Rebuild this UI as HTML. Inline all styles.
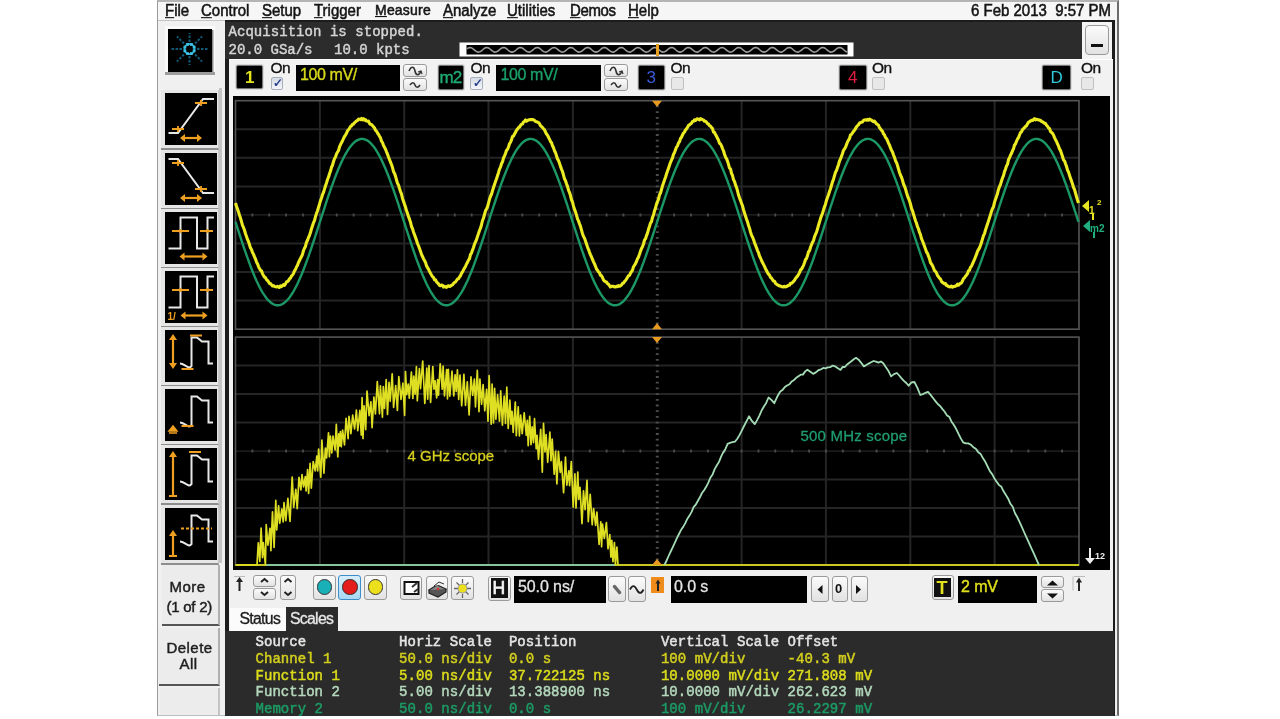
<!DOCTYPE html>
<html><head><meta charset="utf-8">
<style>
html,body{margin:0;padding:0;background:#fff;width:1280px;height:719px;overflow:hidden;position:relative;font-family:"Liberation Sans",sans-serif}
body{filter:blur(0.45px)}
.a{position:absolute;box-sizing:border-box}
.t{position:absolute;white-space:pre;line-height:1;font-family:"Liberation Sans",sans-serif}
.m{position:absolute;white-space:pre;line-height:1;font-family:"Liberation Mono",monospace}
.menu{font-size:15px;color:#141414;top:3px;-webkit-text-stroke:0.5px #141414;transform:scaleY(1.1);transform-origin:0 13px}
.menu u{text-decoration:underline;text-underline-offset:1px}
.blk{background:#000;border:1px solid #777;border-radius:2px;box-shadow:0 0 0 1px #d8d8d8}
.btn{background:linear-gradient(#fbfbfb,#e2e2e2);border:1px solid #9a9a9a;border-radius:3px}
.chk{background:linear-gradient(#d6dbe4,#f4f6f9);border:1px solid #a9b0bc;border-radius:2px}
.on{font-size:15.5px;color:#111;letter-spacing:-0.6px;-webkit-text-stroke:0.35px #111}
.tb{background:#000;border-bottom:2px solid #a8a8a8;border-right:2px solid #c8c8c8}
</style></head><body>
<!-- frame -->
<div class="a" style="left:157px;top:0;width:962px;height:716px;background:#efefef;border-left:1px solid #9a9a9a;border-right:2px solid #6c6c6c;border-top:2px solid #b4b4b4;border-bottom:1px solid #bdbdbd"></div>
<!-- menu -->
<div class="a" style="left:158px;top:2px;width:959px;height:18px;background:#f6f6f6"></div><div class="a" style="left:158px;top:19.5px;width:67px;height:1.5px;background:#c4c4c4"></div>
<div class="t menu" style="left:165px"><u>F</u>ile</div>
<div class="t menu" style="left:201px"><u>C</u>ontrol</div>
<div class="t menu" style="left:262px"><u>S</u>etup</div>
<div class="t menu" style="left:314px"><u>T</u>rigger</div>
<div class="t menu" style="left:375px;font-size:14px;letter-spacing:0.2px"><u>M</u>easure</div>
<div class="t menu" style="left:443px"><u>A</u>nalyze</div>
<div class="t menu" style="left:507px"><u>U</u>tilities</div>
<div class="t menu" style="left:570px;letter-spacing:-0.4px"><u>D</u>emos</div>
<div class="t menu" style="left:628px"><u>H</u>elp</div>
<div class="t menu" style="left:971px">6 Feb 2013  9:57 PM</div>

<!-- left panel -->
<div class="a" style="left:158px;top:21px;width:67px;height:694px;background:#f0f0f0"></div>
<div class="a" style="left:219px;top:88px;width:3px;height:475px;background:#c4c4c4"></div>
<div class="a" style="left:165px;top:26px;width:50px;height:48px;background:#fafafa"></div><div class="a" style="left:168px;top:28.5px;width:44px;height:43px;background:#000;box-shadow:1.5px 1px 0 #8a8a8a"></div>
<div class="a" style="left:165px;top:72px;width:50px;height:2.5px;background:#9c9c9c"></div>
<svg class="a" style="left:168px;top:28px" width="44" height="44" viewBox="0 0 44 44">
 <g stroke="#105a78" stroke-width="2" stroke-dasharray="2.5 1.5">
  <line x1="21.5" y1="14" x2="21.5" y2="5"/><line x1="21.5" y1="28" x2="21.5" y2="37"/>
  <line x1="14" y1="21" x2="3" y2="21"/><line x1="29" y1="21" x2="40" y2="21"/>
  <line x1="16" y1="15.5" x2="9" y2="8.5"/><line x1="27" y1="15.5" x2="34" y2="8.5"/>
  <line x1="16" y1="26.5" x2="9" y2="33.5"/><line x1="27" y1="26.5" x2="34" y2="33.5"/>
 </g>
 <circle cx="21.5" cy="21" r="5" fill="none" stroke="#2aa8cc" stroke-width="2"/>
 <rect x="24.72" y="21.51" width="2.8" height="2.8" fill="#3cc4e8"/><rect x="22.01" y="24.22" width="2.8" height="2.8" fill="#3cc4e8"/><rect x="18.19" y="24.22" width="2.8" height="2.8" fill="#3cc4e8"/><rect x="15.48" y="21.51" width="2.8" height="2.8" fill="#3cc4e8"/><rect x="15.48" y="17.69" width="2.8" height="2.8" fill="#3cc4e8"/><rect x="18.19" y="14.98" width="2.8" height="2.8" fill="#3cc4e8"/><rect x="22.01" y="14.98" width="2.8" height="2.8" fill="#3cc4e8"/><rect x="24.72" y="17.69" width="2.8" height="2.8" fill="#3cc4e8"/>
</svg>

<!-- left toolbar buttons -->
<div class="a" style="left:161px;top:90px;width:58px;height:60px;background:#e6e6e6;border-bottom:2px solid #8e8e8e;border-right:1px solid #c8c8c8"></div>
<div class="a" style="left:165px;top:93px;width:51.5px;height:52px;background:#000"></div>
<svg class="a" style="left:165px;top:93px" width="52" height="52" viewBox="0 0 52 52"><path d="M3.5 40H13L38 6H49" fill="none" stroke="#e8e8e8" stroke-width="2"/><path d="M7 36h12M13 33v6M30 10h12M36 7v6" stroke="#f0a020" stroke-width="1.8"/><path d="M19 45H33" stroke="#f0a020" stroke-width="2.2"/><path d="M15 45l5-4v8z M37 45l-5-4v8z" fill="#f0a020"/></svg>
<div class="a" style="left:161px;top:149.5px;width:58px;height:60px;background:#e6e6e6;border-bottom:2px solid #8e8e8e;border-right:1px solid #c8c8c8"></div>
<div class="a" style="left:165px;top:152.5px;width:51.5px;height:52px;background:#000"></div>
<svg class="a" style="left:165px;top:152.5px" width="52" height="52" viewBox="0 0 52 52"><path d="M3.5 6H13L38 40H49" fill="none" stroke="#e8e8e8" stroke-width="2"/><path d="M7 10h12M13 7v6M30 36h12M36 33v6" stroke="#f0a020" stroke-width="1.8"/><path d="M19 45H33" stroke="#f0a020" stroke-width="2.2"/><path d="M15 45l5-4v8z M37 45l-5-4v8z" fill="#f0a020"/></svg>
<div class="a" style="left:161px;top:209px;width:58px;height:60px;background:#e6e6e6;border-bottom:2px solid #8e8e8e;border-right:1px solid #c8c8c8"></div>
<div class="a" style="left:165px;top:212px;width:51.5px;height:52px;background:#000"></div>
<svg class="a" style="left:165px;top:212px" width="52" height="52" viewBox="0 0 52 52"><path d="M3.5 36.5H15.5V5.5H32V36.5H42.5V5.5H49" fill="none" stroke="#e8e8e8" stroke-width="2"/><path d="M7 19h17M15.5 17v4M35 19h13M42.5 17v4" stroke="#f0a020" stroke-width="1.8"/><path d="M18.5 44.5H38.5" stroke="#f0a020" stroke-width="2.2"/><path d="M14.5 44.5l5-4v8z M42.5 44.5l-5-4v8z" fill="#f0a020"/></svg>
<div class="a" style="left:161px;top:268px;width:58px;height:60px;background:#e6e6e6;border-bottom:2px solid #8e8e8e;border-right:1px solid #c8c8c8"></div>
<div class="a" style="left:165px;top:271px;width:51.5px;height:52px;background:#000"></div>
<svg class="a" style="left:165px;top:271px" width="52" height="52" viewBox="0 0 52 52"><path d="M3.5 36.5H15.5V5.5H32V36.5H42.5V5.5H49" fill="none" stroke="#e8e8e8" stroke-width="2"/><path d="M7 19h17M15.5 17v4M35 19h13M42.5 17v4" stroke="#f0a020" stroke-width="1.8"/><path d="M19.5 44.5H38.5" stroke="#f0a020" stroke-width="2.2"/><path d="M15.5 44.5l5-4v8z M42.5 44.5l-5-4v8z" fill="#f0a020"/><text x="2.5" y="49" font-family="Liberation Sans" font-weight="bold" font-size="10" fill="#f0a020">1/</text></svg>
<div class="a" style="left:161px;top:327px;width:58px;height:60px;background:#e6e6e6;border-bottom:2px solid #8e8e8e;border-right:1px solid #c8c8c8"></div>
<div class="a" style="left:165px;top:330px;width:51.5px;height:52px;background:#000"></div>
<svg class="a" style="left:165px;top:330px" width="52" height="52" viewBox="0 0 52 52"><path d="M15 33.5c3 0 6 3 9 4 1.5 0 2-1 2.5-1.5V7.5h5.5l5 4h6.5V33.5H48" fill="none" stroke="#e8e8e8" stroke-width="2"/><path d="M8 9V34" stroke="#f0a020" stroke-width="2.2"/><path d="M8 4l-4 6h8z M8 39l-4-6h8z" fill="#f0a020"/><path d="M25 5.5h12M16.5 39h12" stroke="#f0a020" stroke-width="2"/></svg>
<div class="a" style="left:161px;top:386px;width:58px;height:60px;background:#e6e6e6;border-bottom:2px solid #8e8e8e;border-right:1px solid #c8c8c8"></div>
<div class="a" style="left:165px;top:389px;width:51.5px;height:52px;background:#000"></div>
<svg class="a" style="left:165px;top:389px" width="52" height="52" viewBox="0 0 52 52"><path d="M15 33.5c3 0 6 3 9 4 1.5 0 2-1 2.5-1.5V7.5h5.5l5 4h6.5V33.5H48" fill="none" stroke="#e8e8e8" stroke-width="2"/><path d="M16.5 37h12" stroke="#f0a020" stroke-width="2"/><path d="M8 37l-4 5h8z M4 44h8" fill="#f0a020" stroke="#f0a020" stroke-width="1.5"/></svg>
<div class="a" style="left:161px;top:445px;width:58px;height:60px;background:#e6e6e6;border-bottom:2px solid #8e8e8e;border-right:1px solid #c8c8c8"></div>
<div class="a" style="left:165px;top:448px;width:51.5px;height:52px;background:#000"></div>
<svg class="a" style="left:165px;top:448px" width="52" height="52" viewBox="0 0 52 52"><path d="M15 33.5c3 0 6 3 9 4 1.5 0 2-1 2.5-1.5V7.5h5.5l5 4h6.5V33.5H48" fill="none" stroke="#e8e8e8" stroke-width="2"/><path d="M8 8V48M4 48h8" stroke="#f0a020" stroke-width="2.2"/><path d="M8 3l-4 6h8z" fill="#f0a020"/><path d="M24 4h12" stroke="#f0a020" stroke-width="2"/></svg>
<div class="a" style="left:161px;top:504.5px;width:58px;height:60px;background:#e6e6e6;border-bottom:2px solid #8e8e8e;border-right:1px solid #c8c8c8"></div>
<div class="a" style="left:165px;top:507.5px;width:51.5px;height:52px;background:#000"></div>
<svg class="a" style="left:165px;top:507.5px" width="52" height="52" viewBox="0 0 52 52"><path d="M15 33.5c3 0 6 3 9 4 1.5 0 2-1 2.5-1.5V7.5h5.5l5 4h6.5V33.5H48" fill="none" stroke="#e8e8e8" stroke-width="2"/><path d="M8 27V48M4 48h8" stroke="#f0a020" stroke-width="2.2"/><path d="M8 22l-4 6h8z" fill="#f0a020"/><path d="M16 20.5H47" stroke="#f0a020" stroke-width="1.8" stroke-dasharray="3 2"/></svg>

<div class="a" style="left:162px;top:565px;width:58px;height:61px;background:#ececec;border-right:2px solid #b0b0b0;border-bottom:2px solid #555"></div>
<div class="t" style="left:169.5px;top:579px;font-size:15px;color:#1e1e1e;letter-spacing:0.5px;-webkit-text-stroke:0.45px #1e1e1e">More</div>
<div class="t" style="left:166.5px;top:598.5px;font-size:15px;color:#1e1e1e;letter-spacing:-0.25px;-webkit-text-stroke:0.45px #1e1e1e">(1 of 2)</div>
<div class="a" style="left:159px;top:628px;width:61px;height:58px;background:#ececec;border-right:2px solid #b0b0b0;border-bottom:2px solid #555"></div>
<div class="t" style="left:166.5px;top:639.5px;font-size:15px;color:#1e1e1e;letter-spacing:0.45px;-webkit-text-stroke:0.45px #1e1e1e">Delete</div>
<div class="t" style="left:179.5px;top:655.5px;font-size:15px;color:#1e1e1e;letter-spacing:0.5px;-webkit-text-stroke:0.45px #1e1e1e">All</div>
<div class="a" style="left:160px;top:688px;width:60px;height:27px;background:#ececec;border-right:2px solid #c4c4c4"></div>

<!-- dark vertical divider -->
<div class="a" style="left:225px;top:21px;width:3.5px;height:695px;background:#1c1c1c"></div>
<!-- status panel -->
<div class="a" style="left:225px;top:20.5px;width:857px;height:38px;background:#2c2c2c"></div>
<div class="m" style="left:228.5px;top:25px;font-size:14px;color:#d4d4d4;-webkit-text-stroke:0.45px #d4d4d4;letter-spacing:0.05px">Acquisition is stopped.</div>
<div class="m" style="left:228.5px;top:42.5px;font-size:14px;color:#d4d4d4;-webkit-text-stroke:0.45px #d4d4d4">20.0 GSa/s</div><div class="m" style="left:334px;top:42.5px;font-size:14px;color:#d4d4d4;-webkit-text-stroke:0.45px #d4d4d4">10.0 kpts</div>
<svg width="1280" height="719" style="position:absolute;left:0;top:0">
<rect x="459.5" y="42.5" width="394" height="14" fill="#fff"/>
<rect x="466.5" y="45" width="381" height="9.5" fill="#000"/>
<polyline points="467.0,48.8 468.0,48.1 469.0,47.7 470.0,47.5 471.0,47.7 472.0,48.1 473.0,48.8 474.0,49.6 475.0,50.5 476.0,51.2 477.0,51.8 478.0,52.1 479.0,52.0 480.0,51.7 481.0,51.1 482.0,50.3 483.0,49.5 484.0,48.6 485.0,48.0 486.0,47.6 487.0,47.5 488.0,47.7 489.0,48.2 490.0,49.0 491.0,49.8 492.0,50.6 493.0,51.4 494.0,51.9 495.0,52.1 496.0,52.0 497.0,51.6 498.0,51.0 499.0,50.1 500.0,49.3 501.0,48.5 502.0,47.9 503.0,47.6 504.0,47.5 505.0,47.8 506.0,48.4 507.0,49.1 508.0,50.0 509.0,50.8 510.0,51.5 511.0,51.9 512.0,52.1 513.0,51.9 514.0,51.5 515.0,50.8 516.0,50.0 517.0,49.1 518.0,48.4 519.0,47.8 520.0,47.5 521.0,47.6 522.0,47.9 523.0,48.5 524.0,49.3 525.0,50.1 526.0,50.9 527.0,51.6 528.0,52.0 529.0,52.1 530.0,51.9 531.0,51.4 532.0,50.6 533.0,49.8 534.0,49.0 535.0,48.2 536.0,47.7 537.0,47.5 538.0,47.6 539.0,48.0 540.0,48.6 541.0,49.5 542.0,50.3 543.0,51.1 544.0,51.7 545.0,52.0 546.0,52.1 547.0,51.8 548.0,51.2 549.0,50.5 550.0,49.6 551.0,48.8 552.0,48.1 553.0,47.7 554.0,47.5 555.0,47.7 556.0,48.1 557.0,48.8 558.0,49.6 559.0,50.5 560.0,51.2 561.0,51.8 562.0,52.1 563.0,52.0 564.0,51.7 565.0,51.1 566.0,50.3 567.0,49.5 568.0,48.7 569.0,48.0 570.0,47.6 571.0,47.5 572.0,47.7 573.0,48.2 574.0,49.0 575.0,49.8 576.0,50.6 577.0,51.4 578.0,51.9 579.0,52.1 580.0,52.0 581.0,51.6 582.0,51.0 583.0,50.1 584.0,49.3 585.0,48.5 586.0,47.9 587.0,47.6 588.0,47.5 589.0,47.8 590.0,48.4 591.0,49.1 592.0,50.0 593.0,50.8 594.0,51.5 595.0,51.9 596.0,52.1 597.0,51.9 598.0,51.5 599.0,50.8 600.0,50.0 601.0,49.1 602.0,48.4 603.0,47.8 604.0,47.5 605.0,47.6 606.0,47.9 607.0,48.5 608.0,49.3 609.0,50.1 610.0,50.9 611.0,51.6 612.0,52.0 613.0,52.1 614.0,51.9 615.0,51.4 616.0,50.6 617.0,49.8 618.0,49.0 619.0,48.2 620.0,47.7 621.0,47.5 622.0,47.6 623.0,48.0 624.0,48.6 625.0,49.5 626.0,50.3 627.0,51.1 628.0,51.7 629.0,52.0 630.0,52.1 631.0,51.8 632.0,51.2 633.0,50.5 634.0,49.6 635.0,48.8 636.0,48.1 637.0,47.7 638.0,47.5 639.0,47.7 640.0,48.1 641.0,48.8 642.0,49.6 643.0,50.5 644.0,51.2 645.0,51.8 646.0,52.1 647.0,52.0 648.0,51.7 649.0,51.1 650.0,50.3 651.0,49.5 652.0,48.6 653.0,48.0 654.0,47.6 655.0,47.5 656.0,47.7 657.0,48.2 658.0,49.0 659.0,49.8 660.0,50.6 661.0,51.4 662.0,51.9 663.0,52.1 664.0,52.0 665.0,51.6 666.0,51.0 667.0,50.1 668.0,49.3 669.0,48.5 670.0,47.9 671.0,47.6 672.0,47.5 673.0,47.8 674.0,48.4 675.0,49.1 676.0,50.0 677.0,50.8 678.0,51.5 679.0,51.9 680.0,52.1 681.0,51.9 682.0,51.5 683.0,50.8 684.0,50.0 685.0,49.1 686.0,48.4 687.0,47.8 688.0,47.5 689.0,47.6 690.0,47.9 691.0,48.5 692.0,49.3 693.0,50.1 694.0,50.9 695.0,51.6 696.0,52.0 697.0,52.1 698.0,51.9 699.0,51.4 700.0,50.6 701.0,49.8 702.0,49.0 703.0,48.2 704.0,47.7 705.0,47.5 706.0,47.6 707.0,48.0 708.0,48.6 709.0,49.5 710.0,50.3 711.0,51.1 712.0,51.7 713.0,52.0 714.0,52.1 715.0,51.8 716.0,51.2 717.0,50.5 718.0,49.6 719.0,48.8 720.0,48.1 721.0,47.7 722.0,47.5 723.0,47.7 724.0,48.1 725.0,48.8 726.0,49.6 727.0,50.5 728.0,51.2 729.0,51.8 730.0,52.1 731.0,52.0 732.0,51.7 733.0,51.1 734.0,50.3 735.0,49.5 736.0,48.7 737.0,48.0 738.0,47.6 739.0,47.5 740.0,47.7 741.0,48.2 742.0,49.0 743.0,49.8 744.0,50.6 745.0,51.4 746.0,51.9 747.0,52.1 748.0,52.0 749.0,51.6 750.0,51.0 751.0,50.1 752.0,49.3 753.0,48.5 754.0,47.9 755.0,47.6 756.0,47.5 757.0,47.8 758.0,48.4 759.0,49.1 760.0,50.0 761.0,50.8 762.0,51.5 763.0,51.9 764.0,52.1 765.0,51.9 766.0,51.5 767.0,50.8 768.0,50.0 769.0,49.1 770.0,48.4 771.0,47.8 772.0,47.5 773.0,47.6 774.0,47.9 775.0,48.5 776.0,49.3 777.0,50.1 778.0,50.9 779.0,51.6 780.0,52.0 781.0,52.1 782.0,51.9 783.0,51.4 784.0,50.6 785.0,49.8 786.0,49.0 787.0,48.2 788.0,47.7 789.0,47.5 790.0,47.6 791.0,48.0 792.0,48.6 793.0,49.5 794.0,50.3 795.0,51.1 796.0,51.7 797.0,52.0 798.0,52.1 799.0,51.8 800.0,51.2 801.0,50.5 802.0,49.6 803.0,48.8 804.0,48.1 805.0,47.7 806.0,47.5 807.0,47.7 808.0,48.1 809.0,48.8 810.0,49.6 811.0,50.5 812.0,51.2 813.0,51.8 814.0,52.1 815.0,52.0 816.0,51.7 817.0,51.1 818.0,50.3 819.0,49.5 820.0,48.7 821.0,48.0 822.0,47.6 823.0,47.5 824.0,47.7 825.0,48.2 826.0,49.0 827.0,49.8 828.0,50.6 829.0,51.4 830.0,51.9 831.0,52.1 832.0,52.0 833.0,51.6 834.0,51.0 835.0,50.1 836.0,49.3 837.0,48.5 838.0,47.9 839.0,47.6 840.0,47.5 841.0,47.8 842.0,48.4 843.0,49.1 844.0,50.0 845.0,50.8 846.0,51.5 847.0,51.9" fill="none" stroke="#9a9a9a" stroke-width="1.6"/>
<rect x="656" y="44" width="3" height="12" fill="#e8a020"/>
</svg>
<div class="a" style="left:1082px;top:20.5px;width:31px;height:38px;background:#f4f4f4"></div>
<div class="a btn" style="left:1085px;top:25px;width:24px;height:30px;border-radius:4px"></div>
<div class="a" style="left:1091px;top:44px;width:12px;height:3px;background:#111"></div>
<div class="a" style="left:1112px;top:20.5px;width:3px;height:696px;background:#1c1c1c"></div>
<div class="a" style="left:225px;top:20px;width:890px;height:2px;background:#1c1c1c"></div>

<!-- channel bar -->
<div class="a" style="left:228.5px;top:58.5px;width:884px;height:37px;background:#f2f2f2;border-top:1px solid #fff"></div>
<div class="a blk" style="left:236px;top:65px;width:27px;height:24px"></div>
<div class="t" style="left:245px;top:69px;font-size:17px;font-weight:bold;color:#e4e41c">1</div>
<div class="t on" style="left:270.5px;top:60px">On</div>
<div class="a chk" style="left:270.5px;top:77px;width:12.5px;height:13px"></div>
<div class="t" style="left:273px;top:77px;font-size:12px;font-weight:bold;color:#27408b">✓</div>
<div class="a" style="left:295.5px;top:64.5px;width:104px;height:26.5px;background:#000"></div>
<div class="t" style="left:300px;top:67px;font-size:16px;color:#dada1c;letter-spacing:-0.4px;-webkit-text-stroke:0.35px #dada1c">100 mV/</div>
<div class="a btn" style="left:403px;top:64px;width:24px;height:13px"></div>
<div class="a btn" style="left:403px;top:78px;width:24px;height:13px"></div>
<svg class="a" style="left:403px;top:64px" width="24" height="27"><path d="M6 7c2-5 5-5 6 0s4 5 6 0M7 21c2-3 4-3 5 0s3 3 5 0" fill="none" stroke="#333" stroke-width="1.6"/><path d="M15 8l3-1 1 3" fill="none" stroke="#333" stroke-width="1.2"/></svg>

<div class="a blk" style="left:437.5px;top:64.5px;width:26.5px;height:25px"></div>
<div class="t" style="left:439.5px;top:69px;font-size:17px;color:#1faa72;letter-spacing:-0.8px;-webkit-text-stroke:0.4px #1faa72">m2</div>
<div class="t on" style="left:470.5px;top:60px">On</div>
<div class="a chk" style="left:470px;top:77px;width:13px;height:13px"></div>
<div class="t" style="left:472.5px;top:77px;font-size:12px;font-weight:bold;color:#27408b">✓</div>
<div class="a" style="left:495.5px;top:64.5px;width:105.5px;height:26.5px;background:#000"></div>
<div class="t" style="left:500.5px;top:67px;font-size:16px;color:#1aa06a;letter-spacing:-0.4px;-webkit-text-stroke:0.35px #1aa06a">100 mV/</div>
<div class="a btn" style="left:604px;top:64px;width:24px;height:13px"></div>
<div class="a btn" style="left:604px;top:78px;width:24px;height:13px"></div>
<svg class="a" style="left:604px;top:64px" width="24" height="27"><path d="M6 7c2-5 5-5 6 0s4 5 6 0M7 21c2-3 4-3 5 0s3 3 5 0" fill="none" stroke="#333" stroke-width="1.6"/><path d="M15 8l3-1 1 3" fill="none" stroke="#333" stroke-width="1.2"/></svg>

<div class="a blk" style="left:638px;top:64.5px;width:27px;height:25px"></div>
<div class="t" style="left:646.5px;top:69px;font-size:17px;color:#3a5ad8">3</div>
<div class="t on" style="left:670.5px;top:60px">On</div>
<div class="a chk" style="left:670.5px;top:77px;width:13px;height:13px;background:#e8e8e8;border-color:#c0c0c0"></div>

<div class="a blk" style="left:839px;top:64.5px;width:28px;height:25px"></div>
<div class="t" style="left:848px;top:69px;font-size:17px;color:#e01c40">4</div>
<div class="t on" style="left:872px;top:60px">On</div>
<div class="a chk" style="left:872px;top:77px;width:13px;height:13px;background:#e8e8e8;border-color:#c0c0c0"></div>

<div class="a blk" style="left:1042px;top:64.5px;width:29px;height:25px"></div>
<div class="t" style="left:1050.5px;top:69px;font-size:17px;color:#30c8d8">D</div>
<div class="t on" style="left:1081px;top:60px">On</div>
<div class="a chk" style="left:1081px;top:77px;width:13px;height:13px;background:#e8e8e8;border-color:#c0c0c0"></div>

<!-- waveform area -->
<div class="a" style="left:228.5px;top:95.5px;width:884px;height:474.5px;background:#f2f2f2"></div>
<div class="a" style="left:232.5px;top:95.5px;width:877.5px;height:474.5px;background:#000"></div>
<svg width="1280" height="719" style="position:absolute;left:0;top:0">
<g stroke="#252525" stroke-width="2"><line x1="319.9" y1="100.7" x2="319.9" y2="329.2"/><line x1="404.2" y1="100.7" x2="404.2" y2="329.2"/><line x1="488.5" y1="100.7" x2="488.5" y2="329.2"/><line x1="572.9" y1="100.7" x2="572.9" y2="329.2"/><line x1="741.6" y1="100.7" x2="741.6" y2="329.2"/><line x1="825.9" y1="100.7" x2="825.9" y2="329.2"/><line x1="910.3" y1="100.7" x2="910.3" y2="329.2"/><line x1="994.6" y1="100.7" x2="994.6" y2="329.2"/><line x1="235.5" y1="129.3" x2="1079.0" y2="129.3"/><line x1="235.5" y1="157.8" x2="1079.0" y2="157.8"/><line x1="235.5" y1="186.4" x2="1079.0" y2="186.4"/><line x1="235.5" y1="243.5" x2="1079.0" y2="243.5"/><line x1="235.5" y1="272.1" x2="1079.0" y2="272.1"/><line x1="235.5" y1="300.6" x2="1079.0" y2="300.6"/></g><line x1="235.5" y1="214.9" x2="1079.0" y2="214.9" stroke="#262626" stroke-width="1.4"/><path d="M252.4 213.4v3M269.2 213.4v3M286.1 213.4v3M303.0 213.4v3M319.9 213.4v3M336.7 213.4v3M353.6 213.4v3M370.5 213.4v3M387.3 213.4v3M404.2 213.4v3M421.1 213.4v3M437.9 213.4v3M454.8 213.4v3M471.7 213.4v3M488.5 213.4v3M505.4 213.4v3M522.3 213.4v3M539.2 213.4v3M556.0 213.4v3M572.9 213.4v3M589.8 213.4v3M606.6 213.4v3M623.5 213.4v3M640.4 213.4v3M657.2 213.4v3M674.1 213.4v3M691.0 213.4v3M707.9 213.4v3M724.7 213.4v3M741.6 213.4v3M758.5 213.4v3M775.3 213.4v3M792.2 213.4v3M809.1 213.4v3M825.9 213.4v3M842.8 213.4v3M859.7 213.4v3M876.6 213.4v3M893.4 213.4v3M910.3 213.4v3M927.2 213.4v3M944.0 213.4v3M960.9 213.4v3M977.8 213.4v3M994.6 213.4v3M1011.5 213.4v3M1028.4 213.4v3M1045.3 213.4v3M1062.1 213.4v3M655.8 106.4h3M655.8 112.1h3M655.8 117.8h3M655.8 123.6h3M655.8 129.3h3M655.8 135.0h3M655.8 140.7h3M655.8 146.4h3M655.8 152.1h3M655.8 157.8h3M655.8 163.5h3M655.8 169.2h3M655.8 175.0h3M655.8 180.7h3M655.8 186.4h3M655.8 192.1h3M655.8 197.8h3M655.8 203.5h3M655.8 209.2h3M655.8 214.9h3M655.8 220.7h3M655.8 226.4h3M655.8 232.1h3M655.8 237.8h3M655.8 243.5h3M655.8 249.2h3M655.8 254.9h3M655.8 260.7h3M655.8 266.4h3M655.8 272.1h3M655.8 277.8h3M655.8 283.5h3M655.8 289.2h3M655.8 294.9h3M655.8 300.6h3M655.8 306.4h3M655.8 312.1h3M655.8 317.8h3M655.8 323.5h3" stroke="#4c4c4c" stroke-width="1.8"/><rect x="235.5" y="100.7" width="843.5" height="228.5" fill="none" stroke="#555" stroke-width="1.6"/>
<g stroke="#252525" stroke-width="2"><line x1="319.9" y1="337.1" x2="319.9" y2="565.0"/><line x1="404.2" y1="337.1" x2="404.2" y2="565.0"/><line x1="488.5" y1="337.1" x2="488.5" y2="565.0"/><line x1="572.9" y1="337.1" x2="572.9" y2="565.0"/><line x1="741.6" y1="337.1" x2="741.6" y2="565.0"/><line x1="825.9" y1="337.1" x2="825.9" y2="565.0"/><line x1="910.3" y1="337.1" x2="910.3" y2="565.0"/><line x1="994.6" y1="337.1" x2="994.6" y2="565.0"/><line x1="235.5" y1="365.6" x2="1079.0" y2="365.6"/><line x1="235.5" y1="394.1" x2="1079.0" y2="394.1"/><line x1="235.5" y1="422.6" x2="1079.0" y2="422.6"/><line x1="235.5" y1="479.5" x2="1079.0" y2="479.5"/><line x1="235.5" y1="508.0" x2="1079.0" y2="508.0"/><line x1="235.5" y1="536.5" x2="1079.0" y2="536.5"/></g><line x1="235.5" y1="451.1" x2="1079.0" y2="451.1" stroke="#262626" stroke-width="1.4"/><path d="M252.4 449.6v3M269.2 449.6v3M286.1 449.6v3M303.0 449.6v3M319.9 449.6v3M336.7 449.6v3M353.6 449.6v3M370.5 449.6v3M387.3 449.6v3M404.2 449.6v3M421.1 449.6v3M437.9 449.6v3M454.8 449.6v3M471.7 449.6v3M488.5 449.6v3M505.4 449.6v3M522.3 449.6v3M539.2 449.6v3M556.0 449.6v3M572.9 449.6v3M589.8 449.6v3M606.6 449.6v3M623.5 449.6v3M640.4 449.6v3M657.2 449.6v3M674.1 449.6v3M691.0 449.6v3M707.9 449.6v3M724.7 449.6v3M741.6 449.6v3M758.5 449.6v3M775.3 449.6v3M792.2 449.6v3M809.1 449.6v3M825.9 449.6v3M842.8 449.6v3M859.7 449.6v3M876.6 449.6v3M893.4 449.6v3M910.3 449.6v3M927.2 449.6v3M944.0 449.6v3M960.9 449.6v3M977.8 449.6v3M994.6 449.6v3M1011.5 449.6v3M1028.4 449.6v3M1045.3 449.6v3M1062.1 449.6v3M655.8 342.8h3M655.8 348.5h3M655.8 354.2h3M655.8 359.9h3M655.8 365.6h3M655.8 371.3h3M655.8 377.0h3M655.8 382.7h3M655.8 388.4h3M655.8 394.1h3M655.8 399.8h3M655.8 405.5h3M655.8 411.2h3M655.8 416.9h3M655.8 422.6h3M655.8 428.3h3M655.8 434.0h3M655.8 439.7h3M655.8 445.4h3M655.8 451.1h3M655.8 456.7h3M655.8 462.4h3M655.8 468.1h3M655.8 473.8h3M655.8 479.5h3M655.8 485.2h3M655.8 490.9h3M655.8 496.6h3M655.8 502.3h3M655.8 508.0h3M655.8 513.7h3M655.8 519.4h3M655.8 525.1h3M655.8 530.8h3M655.8 536.5h3M655.8 542.2h3M655.8 547.9h3M655.8 553.6h3M655.8 559.3h3" stroke="#4c4c4c" stroke-width="1.8"/><rect x="235.5" y="337.1" width="843.5" height="227.9" fill="none" stroke="#555" stroke-width="1.6"/>
<polyline points="235.5,221.9 236.5,225.0 237.5,228.1 238.5,231.2 239.5,234.3 240.5,237.4 241.5,240.4 242.5,243.4 243.5,246.4 244.5,249.3 245.5,252.2 246.5,255.1 247.5,257.9 248.5,260.7 249.5,263.4 250.5,266.1 251.5,268.7 252.5,271.2 253.5,273.7 254.5,276.1 255.5,278.4 256.5,280.7 257.5,282.8 258.5,284.9 259.5,286.9 260.5,288.8 261.5,290.6 262.5,292.3 263.5,293.9 264.5,295.4 265.5,296.8 266.5,298.2 267.5,299.4 268.5,300.5 269.5,301.4 270.5,302.3 271.5,303.1 272.5,303.7 273.5,304.3 274.5,304.7 275.5,305.0 276.5,305.2 277.5,305.3 278.5,305.3 279.5,305.1 280.5,304.8 281.5,304.5 282.5,304.0 283.5,303.4 284.5,302.6 285.5,301.8 286.5,300.9 287.5,299.8 288.5,298.7 289.5,297.4 290.5,296.0 291.5,294.5 292.5,293.0 293.5,291.3 294.5,289.5 295.5,287.7 296.5,285.7 297.5,283.7 298.5,281.5 299.5,279.3 300.5,277.0 301.5,274.7 302.5,272.2 303.5,269.7 304.5,267.1 305.5,264.5 306.5,261.8 307.5,259.1 308.5,256.3 309.5,253.4 310.5,250.5 311.5,247.6 312.5,244.6 313.5,241.6 314.5,238.6 315.5,235.5 316.5,232.5 317.5,229.4 318.5,226.3 319.5,223.2 320.5,220.1 321.5,217.0 322.5,213.9 323.5,210.8 324.5,207.8 325.5,204.7 326.5,201.7 327.5,198.7 328.5,195.7 329.5,192.8 330.5,189.9 331.5,187.1 332.5,184.3 333.5,181.6 334.5,178.9 335.5,176.3 336.5,173.7 337.5,171.2 338.5,168.8 339.5,166.5 340.5,164.2 341.5,162.0 342.5,159.9 343.5,157.9 344.5,156.0 345.5,154.1 346.5,152.4 347.5,150.8 348.5,149.2 349.5,147.8 350.5,146.4 351.5,145.2 352.5,144.1 353.5,143.0 354.5,142.1 355.5,141.3 356.5,140.6 357.5,140.1 358.5,139.6 359.5,139.3 360.5,139.0 361.5,138.9 362.5,138.9 363.5,139.0 364.5,139.3 365.5,139.6 366.5,140.1 367.5,140.6 368.5,141.3 369.5,142.1 370.5,143.0 371.5,144.1 372.5,145.2 373.5,146.4 374.5,147.8 375.5,149.2 376.5,150.8 377.5,152.4 378.5,154.1 379.5,156.0 380.5,157.9 381.5,159.9 382.5,162.0 383.5,164.2 384.5,166.5 385.5,168.8 386.5,171.2 387.5,173.7 388.5,176.3 389.5,178.9 390.5,181.6 391.5,184.3 392.5,187.1 393.5,189.9 394.5,192.8 395.5,195.7 396.5,198.7 397.5,201.7 398.5,204.7 399.5,207.8 400.5,210.8 401.5,213.9 402.5,217.0 403.5,220.1 404.5,223.2 405.5,226.3 406.5,229.4 407.5,232.5 408.5,235.5 409.5,238.6 410.5,241.6 411.5,244.6 412.5,247.6 413.5,250.5 414.5,253.4 415.5,256.3 416.5,259.1 417.5,261.8 418.5,264.5 419.5,267.1 420.5,269.7 421.5,272.2 422.5,274.7 423.5,277.0 424.5,279.3 425.5,281.5 426.5,283.7 427.5,285.7 428.5,287.7 429.5,289.5 430.5,291.3 431.5,293.0 432.5,294.5 433.5,296.0 434.5,297.4 435.5,298.7 436.5,299.8 437.5,300.9 438.5,301.8 439.5,302.6 440.5,303.4 441.5,304.0 442.5,304.5 443.5,304.8 444.5,305.1 445.5,305.3 446.5,305.3 447.5,305.2 448.5,305.0 449.5,304.7 450.5,304.3 451.5,303.7 452.5,303.1 453.5,302.3 454.5,301.4 455.5,300.5 456.5,299.4 457.5,298.2 458.5,296.8 459.5,295.4 460.5,293.9 461.5,292.3 462.5,290.6 463.5,288.8 464.5,286.9 465.5,284.9 466.5,282.8 467.5,280.7 468.5,278.4 469.5,276.1 470.5,273.7 471.5,271.2 472.5,268.7 473.5,266.1 474.5,263.4 475.5,260.7 476.5,257.9 477.5,255.1 478.5,252.2 479.5,249.3 480.5,246.4 481.5,243.4 482.5,240.4 483.5,237.4 484.5,234.3 485.5,231.2 486.5,228.1 487.5,225.0 488.5,221.9 489.5,218.8 490.5,215.7 491.5,212.7 492.5,209.6 493.5,206.5 494.5,203.5 495.5,200.5 496.5,197.5 497.5,194.6 498.5,191.7 499.5,188.8 500.5,186.0 501.5,183.2 502.5,180.5 503.5,177.8 504.5,175.3 505.5,172.7 506.5,170.3 507.5,167.9 508.5,165.6 509.5,163.3 510.5,161.2 511.5,159.1 512.5,157.1 513.5,155.2 514.5,153.4 515.5,151.7 516.5,150.1 517.5,148.6 518.5,147.2 519.5,145.9 520.5,144.7 521.5,143.6 522.5,142.7 523.5,141.8 524.5,141.0 525.5,140.4 526.5,139.9 527.5,139.5 528.5,139.2 529.5,139.0 530.5,138.9 531.5,138.9 532.5,139.1 533.5,139.4 534.5,139.8 535.5,140.3 536.5,140.9 537.5,141.6 538.5,142.5 539.5,143.4 540.5,144.5 541.5,145.7 542.5,146.9 543.5,148.3 544.5,149.8 545.5,151.4 546.5,153.1 547.5,154.9 548.5,156.7 549.5,158.7 550.5,160.7 551.5,162.9 552.5,165.1 553.5,167.4 554.5,169.8 555.5,172.2 556.5,174.7 557.5,177.3 558.5,180.0 559.5,182.7 560.5,185.4 561.5,188.2 562.5,191.1 563.5,194.0 564.5,196.9 565.5,199.9 566.5,202.9 567.5,205.9 568.5,209.0 569.5,212.0 570.5,215.1 571.5,218.2 572.5,221.3 573.5,224.4 574.5,227.5 575.5,230.6 576.5,233.7 577.5,236.8 578.5,239.8 579.5,242.8 580.5,245.8 581.5,248.8 582.5,251.7 583.5,254.5 584.5,257.4 585.5,260.2 586.5,262.9 587.5,265.6 588.5,268.2 589.5,270.7 590.5,273.2 591.5,275.6 592.5,278.0 593.5,280.2 594.5,282.4 595.5,284.5 596.5,286.5 597.5,288.4 598.5,290.2 599.5,292.0 600.5,293.6 601.5,295.1 602.5,296.6 603.5,297.9 604.5,299.1 605.5,300.2 606.5,301.3 607.5,302.2 608.5,302.9 609.5,303.6 610.5,304.2 611.5,304.6 612.5,305.0 613.5,305.2 614.5,305.3 615.5,305.3 616.5,305.2 617.5,304.9 618.5,304.6 619.5,304.1 620.5,303.5 621.5,302.8 622.5,302.0 623.5,301.1 624.5,300.0 625.5,298.9 626.5,297.6 627.5,296.3 628.5,294.8 629.5,293.3 630.5,291.6 631.5,289.9 632.5,288.0 633.5,286.1 634.5,284.1 635.5,282.0 636.5,279.8 637.5,277.5 638.5,275.1 639.5,272.7 640.5,270.2 641.5,267.7 642.5,265.0 643.5,262.4 644.5,259.6 645.5,256.8 646.5,254.0 647.5,251.1 648.5,248.2 649.5,245.2 650.5,242.2 651.5,239.2 652.5,236.1 653.5,233.1 654.5,230.0 655.5,226.9 656.5,223.8 657.5,220.7 658.5,217.6 659.5,214.5 660.5,211.4 661.5,208.4 662.5,205.3 663.5,202.3 664.5,199.3 665.5,196.3 666.5,193.4 667.5,190.5 668.5,187.7 669.5,184.9 670.5,182.1 671.5,179.4 672.5,176.8 673.5,174.2 674.5,171.7 675.5,169.3 676.5,166.9 677.5,164.7 678.5,162.5 679.5,160.3 680.5,158.3 681.5,156.4 682.5,154.5 683.5,152.7 684.5,151.1 685.5,149.5 686.5,148.0 687.5,146.7 688.5,145.4 689.5,144.3 690.5,143.2 691.5,142.3 692.5,141.5 693.5,140.8 694.5,140.2 695.5,139.7 696.5,139.3 697.5,139.1 698.5,138.9 699.5,138.9 700.5,139.0 701.5,139.2 702.5,139.5 703.5,140.0 704.5,140.5 705.5,141.2 706.5,142.0 707.5,142.8 708.5,143.8 709.5,145.0 710.5,146.2 711.5,147.5 712.5,148.9 713.5,150.4 714.5,152.1 715.5,153.8 716.5,155.6 717.5,157.5 718.5,159.5 719.5,161.6 720.5,163.8 721.5,166.0 722.5,168.3 723.5,170.7 724.5,173.2 725.5,175.8 726.5,178.4 727.5,181.0 728.5,183.8 729.5,186.5 730.5,189.4 731.5,192.2 732.5,195.2 733.5,198.1 734.5,201.1 735.5,204.1 736.5,207.1 737.5,210.2 738.5,213.3 739.5,216.4 740.5,219.5 741.5,222.6 742.5,225.7 743.5,228.8 744.5,231.8 745.5,234.9 746.5,238.0 747.5,241.0 748.5,244.0 749.5,247.0 750.5,249.9 751.5,252.8 752.5,255.7 753.5,258.5 754.5,261.3 755.5,264.0 756.5,266.6 757.5,269.2 758.5,271.7 759.5,274.2 760.5,276.6 761.5,278.9 762.5,281.1 763.5,283.2 764.5,285.3 765.5,287.3 766.5,289.2 767.5,290.9 768.5,292.6 769.5,294.2 770.5,295.7 771.5,297.1 772.5,298.4 773.5,299.6 774.5,300.7 775.5,301.6 776.5,302.5 777.5,303.2 778.5,303.9 779.5,304.4 780.5,304.8 781.5,305.1 782.5,305.2 783.5,305.3 784.5,305.2 785.5,305.1 786.5,304.8 787.5,304.4 788.5,303.9 789.5,303.2 790.5,302.5 791.5,301.6 792.5,300.7 793.5,299.6 794.5,298.4 795.5,297.1 796.5,295.7 797.5,294.2 798.5,292.6 799.5,290.9 800.5,289.2 801.5,287.3 802.5,285.3 803.5,283.2 804.5,281.1 805.5,278.9 806.5,276.6 807.5,274.2 808.5,271.7 809.5,269.2 810.5,266.6 811.5,264.0 812.5,261.3 813.5,258.5 814.5,255.7 815.5,252.8 816.5,249.9 817.5,247.0 818.5,244.0 819.5,241.0 820.5,238.0 821.5,234.9 822.5,231.8 823.5,228.8 824.5,225.7 825.5,222.6 826.5,219.5 827.5,216.4 828.5,213.3 829.5,210.2 830.5,207.1 831.5,204.1 832.5,201.1 833.5,198.1 834.5,195.2 835.5,192.2 836.5,189.4 837.5,186.5 838.5,183.8 839.5,181.0 840.5,178.4 841.5,175.8 842.5,173.2 843.5,170.7 844.5,168.3 845.5,166.0 846.5,163.8 847.5,161.6 848.5,159.5 849.5,157.5 850.5,155.6 851.5,153.8 852.5,152.1 853.5,150.4 854.5,148.9 855.5,147.5 856.5,146.2 857.5,145.0 858.5,143.8 859.5,142.8 860.5,142.0 861.5,141.2 862.5,140.5 863.5,140.0 864.5,139.5 865.5,139.2 866.5,139.0 867.5,138.9 868.5,138.9 869.5,139.1 870.5,139.3 871.5,139.7 872.5,140.2 873.5,140.8 874.5,141.5 875.5,142.3 876.5,143.2 877.5,144.3 878.5,145.4 879.5,146.7 880.5,148.0 881.5,149.5 882.5,151.1 883.5,152.7 884.5,154.5 885.5,156.4 886.5,158.3 887.5,160.3 888.5,162.5 889.5,164.7 890.5,166.9 891.5,169.3 892.5,171.7 893.5,174.2 894.5,176.8 895.5,179.4 896.5,182.1 897.5,184.9 898.5,187.7 899.5,190.5 900.5,193.4 901.5,196.3 902.5,199.3 903.5,202.3 904.5,205.3 905.5,208.4 906.5,211.4 907.5,214.5 908.5,217.6 909.5,220.7 910.5,223.8 911.5,226.9 912.5,230.0 913.5,233.1 914.5,236.1 915.5,239.2 916.5,242.2 917.5,245.2 918.5,248.2 919.5,251.1 920.5,254.0 921.5,256.8 922.5,259.6 923.5,262.4 924.5,265.0 925.5,267.7 926.5,270.2 927.5,272.7 928.5,275.1 929.5,277.5 930.5,279.8 931.5,282.0 932.5,284.1 933.5,286.1 934.5,288.0 935.5,289.9 936.5,291.6 937.5,293.3 938.5,294.8 939.5,296.3 940.5,297.6 941.5,298.9 942.5,300.0 943.5,301.1 944.5,302.0 945.5,302.8 946.5,303.5 947.5,304.1 948.5,304.6 949.5,304.9 950.5,305.2 951.5,305.3 952.5,305.3 953.5,305.2 954.5,305.0 955.5,304.6 956.5,304.2 957.5,303.6 958.5,302.9 959.5,302.2 960.5,301.3 961.5,300.2 962.5,299.1 963.5,297.9 964.5,296.6 965.5,295.1 966.5,293.6 967.5,292.0 968.5,290.2 969.5,288.4 970.5,286.5 971.5,284.5 972.5,282.4 973.5,280.2 974.5,278.0 975.5,275.6 976.5,273.2 977.5,270.7 978.5,268.2 979.5,265.6 980.5,262.9 981.5,260.2 982.5,257.4 983.5,254.5 984.5,251.7 985.5,248.8 986.5,245.8 987.5,242.8 988.5,239.8 989.5,236.8 990.5,233.7 991.5,230.6 992.5,227.5 993.5,224.4 994.5,221.3 995.5,218.2 996.5,215.1 997.5,212.0 998.5,209.0 999.5,205.9 1000.5,202.9 1001.5,199.9 1002.5,196.9 1003.5,194.0 1004.5,191.1 1005.5,188.2 1006.5,185.4 1007.5,182.7 1008.5,180.0 1009.5,177.3 1010.5,174.7 1011.5,172.2 1012.5,169.8 1013.5,167.4 1014.5,165.1 1015.5,162.9 1016.5,160.7 1017.5,158.7 1018.5,156.7 1019.5,154.9 1020.5,153.1 1021.5,151.4 1022.5,149.8 1023.5,148.3 1024.5,146.9 1025.5,145.7 1026.5,144.5 1027.5,143.4 1028.5,142.5 1029.5,141.6 1030.5,140.9 1031.5,140.3 1032.5,139.8 1033.5,139.4 1034.5,139.1 1035.5,138.9 1036.5,138.9 1037.5,139.0 1038.5,139.2 1039.5,139.5 1040.5,139.9 1041.5,140.4 1042.5,141.0 1043.5,141.8 1044.5,142.7 1045.5,143.6 1046.5,144.7 1047.5,145.9 1048.5,147.2 1049.5,148.6 1050.5,150.1 1051.5,151.7 1052.5,153.4 1053.5,155.2 1054.5,157.1 1055.5,159.1 1056.5,161.2 1057.5,163.3 1058.5,165.6 1059.5,167.9 1060.5,170.3 1061.5,172.7 1062.5,175.3 1063.5,177.8 1064.5,180.5 1065.5,183.2 1066.5,186.0 1067.5,188.8 1068.5,191.7 1069.5,194.6 1070.5,197.5 1071.5,200.5 1072.5,203.5 1073.5,206.5 1074.5,209.6 1075.5,212.7 1076.5,215.7 1077.5,218.8 1078.5,221.9" fill="none" stroke="#1c9866" stroke-width="2.4" stroke-linejoin="round"/>
<polyline points="235.5,203.0 236.5,206.3 237.5,209.1 238.5,211.9 239.5,215.3 240.5,218.1 241.5,221.7 242.5,225.3 243.5,227.4 244.5,230.3 245.5,233.8 246.5,236.6 247.5,239.4 248.5,241.6 249.5,244.8 250.5,247.9 251.5,249.5 252.5,252.5 253.5,254.2 254.5,256.9 255.5,259.0 256.5,262.1 257.5,263.7 258.5,266.6 259.5,268.5 260.5,270.3 261.5,270.9 262.5,273.6 263.5,275.5 264.5,277.1 265.5,277.7 266.5,279.6 267.5,280.5 268.5,281.7 269.5,283.6 270.5,283.6 271.5,284.8 272.5,285.9 273.5,285.7 274.5,286.3 275.5,286.8 276.5,286.9 277.5,286.4 278.5,287.0 279.5,287.5 280.5,285.8 281.5,286.6 282.5,285.7 283.5,284.7 284.5,285.3 285.5,283.9 286.5,281.9 287.5,281.5 288.5,280.6 289.5,278.9 290.5,278.0 291.5,276.1 292.5,274.9 293.5,273.6 294.5,270.8 295.5,269.3 296.5,267.0 297.5,265.3 298.5,262.5 299.5,260.5 300.5,258.4 301.5,256.6 302.5,254.3 303.5,250.5 304.5,248.2 305.5,246.2 306.5,242.2 307.5,240.2 308.5,237.5 309.5,235.4 310.5,232.2 311.5,228.7 312.5,225.7 313.5,222.7 314.5,220.6 315.5,216.5 316.5,213.5 317.5,210.7 318.5,207.4 319.5,204.2 320.5,200.6 321.5,198.0 322.5,194.7 323.5,192.4 324.5,189.1 325.5,185.7 326.5,183.0 327.5,179.5 328.5,177.2 329.5,173.7 330.5,171.1 331.5,167.3 332.5,165.3 333.5,161.5 334.5,158.7 335.5,156.9 336.5,154.0 337.5,152.1 338.5,150.7 339.5,146.8 340.5,144.6 341.5,142.8 342.5,140.8 343.5,138.5 344.5,136.5 345.5,135.1 346.5,133.3 347.5,130.8 348.5,129.7 349.5,128.3 350.5,126.5 351.5,125.9 352.5,124.2 353.5,124.1 354.5,122.7 355.5,121.9 356.5,120.9 357.5,120.5 358.5,119.1 359.5,119.2 360.5,119.7 361.5,118.4 362.5,119.8 363.5,118.7 364.5,120.1 365.5,119.7 366.5,121.0 367.5,121.2 368.5,121.1 369.5,123.3 370.5,124.3 371.5,124.6 372.5,125.6 373.5,126.9 374.5,127.8 375.5,130.3 376.5,131.1 377.5,133.0 378.5,134.4 379.5,136.3 380.5,137.9 381.5,141.2 382.5,142.6 383.5,145.4 384.5,147.2 385.5,149.2 386.5,151.8 387.5,154.2 388.5,157.1 389.5,159.5 390.5,162.2 391.5,164.5 392.5,167.5 393.5,171.6 394.5,173.4 395.5,176.1 396.5,179.8 397.5,183.3 398.5,185.0 399.5,188.6 400.5,191.5 401.5,194.1 402.5,198.4 403.5,201.2 404.5,204.3 405.5,207.0 406.5,210.8 407.5,213.4 408.5,216.7 409.5,219.2 410.5,222.2 411.5,226.5 412.5,228.6 413.5,232.0 414.5,234.7 415.5,237.4 416.5,240.2 417.5,243.5 418.5,245.8 419.5,248.5 420.5,251.2 421.5,254.3 422.5,256.5 423.5,258.7 424.5,260.6 425.5,262.4 426.5,265.7 427.5,267.7 428.5,269.2 429.5,271.4 430.5,273.3 431.5,275.0 432.5,276.6 433.5,277.4 434.5,279.8 435.5,279.7 436.5,281.9 437.5,282.8 438.5,283.9 439.5,285.3 440.5,285.8 441.5,285.1 442.5,285.3 443.5,287.0 444.5,286.3 445.5,287.0 446.5,287.4 447.5,286.1 448.5,285.7 449.5,286.5 450.5,286.0 451.5,285.3 452.5,284.8 453.5,283.6 454.5,282.4 455.5,282.0 456.5,280.5 457.5,279.0 458.5,278.7 459.5,277.0 460.5,275.7 461.5,273.4 462.5,271.9 463.5,269.9 464.5,268.0 465.5,266.5 466.5,264.0 467.5,262.4 468.5,260.1 469.5,258.6 470.5,254.5 471.5,253.1 472.5,250.1 473.5,247.5 474.5,244.1 475.5,241.9 476.5,239.7 477.5,236.4 478.5,233.6 479.5,230.5 480.5,228.2 481.5,224.7 482.5,220.5 483.5,218.2 484.5,214.5 485.5,210.8 486.5,209.0 487.5,206.8 488.5,203.1 489.5,199.3 490.5,196.3 491.5,194.3 492.5,190.7 493.5,187.5 494.5,184.4 495.5,181.5 496.5,178.8 497.5,175.7 498.5,172.7 499.5,169.1 500.5,167.1 501.5,163.7 502.5,161.8 503.5,158.0 504.5,155.9 505.5,153.5 506.5,150.3 507.5,149.4 508.5,147.0 509.5,143.8 510.5,142.2 511.5,139.9 512.5,136.4 513.5,136.0 514.5,134.0 515.5,132.4 516.5,130.2 517.5,129.1 518.5,127.7 519.5,127.1 520.5,125.4 521.5,124.2 522.5,124.0 523.5,122.0 524.5,121.4 525.5,120.0 526.5,121.2 527.5,120.4 528.5,120.1 529.5,119.8 530.5,119.5 531.5,119.6 532.5,119.5 533.5,119.8 534.5,120.3 535.5,121.5 536.5,121.7 537.5,122.1 538.5,122.7 539.5,123.6 540.5,125.8 541.5,126.5 542.5,127.5 543.5,128.7 544.5,129.8 545.5,132.0 546.5,134.1 547.5,135.3 548.5,137.3 549.5,139.2 550.5,141.5 551.5,142.8 552.5,145.7 553.5,147.7 554.5,150.9 555.5,152.6 556.5,155.8 557.5,158.9 558.5,160.6 559.5,163.2 560.5,166.4 561.5,169.1 562.5,171.5 563.5,175.1 564.5,178.8 565.5,180.7 566.5,183.8 567.5,186.4 568.5,190.1 569.5,192.5 570.5,195.6 571.5,199.9 572.5,202.0 573.5,206.1 574.5,209.4 575.5,211.9 576.5,215.1 577.5,218.9 578.5,220.9 579.5,223.8 580.5,226.4 581.5,230.1 582.5,233.7 583.5,236.4 584.5,238.3 585.5,241.1 586.5,244.0 587.5,247.1 588.5,249.5 589.5,252.3 590.5,254.8 591.5,257.0 592.5,259.4 593.5,261.8 594.5,263.9 595.5,266.3 596.5,269.0 597.5,270.3 598.5,271.9 599.5,272.7 600.5,275.4 601.5,275.8 602.5,277.5 603.5,280.0 604.5,281.1 605.5,281.8 606.5,282.1 607.5,283.6 608.5,284.3 609.5,285.6 610.5,287.0 611.5,286.4 612.5,286.3 613.5,286.3 614.5,287.0 615.5,286.9 616.5,286.3 617.5,286.7 618.5,285.7 619.5,286.3 620.5,285.7 621.5,285.0 622.5,283.4 623.5,283.0 624.5,281.6 625.5,280.4 626.5,279.1 627.5,277.3 628.5,275.7 629.5,275.3 630.5,273.1 631.5,271.6 632.5,270.1 633.5,266.8 634.5,265.2 635.5,263.6 636.5,261.5 637.5,258.8 638.5,257.1 639.5,254.3 640.5,251.1 641.5,248.6 642.5,246.8 643.5,244.0 644.5,240.0 645.5,238.8 646.5,235.6 647.5,233.1 648.5,229.3 649.5,226.3 650.5,222.9 651.5,221.7 652.5,217.3 653.5,215.0 654.5,210.8 655.5,208.1 656.5,204.1 657.5,201.6 658.5,199.2 659.5,194.9 660.5,193.0 661.5,189.5 662.5,185.8 663.5,183.0 664.5,180.0 665.5,177.2 666.5,174.0 667.5,171.0 668.5,168.4 669.5,165.2 670.5,162.3 671.5,160.2 672.5,158.0 673.5,154.2 674.5,152.5 675.5,149.7 676.5,147.2 677.5,145.8 678.5,142.9 679.5,141.7 680.5,138.5 681.5,137.2 682.5,135.0 683.5,133.0 684.5,132.0 685.5,130.0 686.5,128.9 687.5,127.2 688.5,125.4 689.5,124.8 690.5,123.8 691.5,123.3 692.5,121.5 693.5,121.3 694.5,119.8 695.5,120.5 696.5,119.3 697.5,118.7 698.5,119.4 699.5,120.0 700.5,118.7 701.5,119.2 702.5,119.7 703.5,119.9 704.5,121.2 705.5,121.3 706.5,122.1 707.5,123.7 708.5,124.0 709.5,125.7 710.5,126.2 711.5,127.4 712.5,128.6 713.5,132.0 714.5,132.5 715.5,134.5 716.5,136.2 717.5,138.2 718.5,140.2 719.5,143.2 720.5,143.9 721.5,145.9 722.5,148.5 723.5,150.8 724.5,154.3 725.5,156.9 726.5,158.7 727.5,161.1 728.5,164.4 729.5,168.1 730.5,168.8 731.5,173.4 732.5,175.5 733.5,179.6 734.5,181.5 735.5,184.9 736.5,187.4 737.5,190.7 738.5,195.0 739.5,197.8 740.5,200.3 741.5,203.2 742.5,205.8 743.5,209.7 744.5,213.0 745.5,216.1 746.5,219.1 747.5,221.7 748.5,225.2 749.5,228.2 750.5,231.9 751.5,235.1 752.5,237.0 753.5,239.5 754.5,242.6 755.5,245.1 756.5,247.7 757.5,250.6 758.5,252.7 759.5,256.0 760.5,258.0 761.5,260.5 762.5,262.5 763.5,264.4 764.5,266.4 765.5,268.7 766.5,270.5 767.5,272.7 768.5,274.2 769.5,275.2 770.5,277.4 771.5,278.1 772.5,279.7 773.5,281.1 774.5,281.3 775.5,283.3 776.5,284.2 777.5,284.8 778.5,285.3 779.5,285.9 780.5,286.0 781.5,286.6 782.5,286.7 783.5,287.0 784.5,286.3 785.5,286.9 786.5,286.5 787.5,286.0 788.5,285.3 789.5,285.2 790.5,283.3 791.5,283.5 792.5,282.5 793.5,281.4 794.5,280.2 795.5,278.4 796.5,277.2 797.5,276.2 798.5,274.5 799.5,272.6 800.5,270.0 801.5,269.1 802.5,267.4 803.5,265.3 804.5,262.7 805.5,259.6 806.5,258.5 807.5,255.6 808.5,251.9 809.5,250.8 810.5,247.3 811.5,244.7 812.5,242.3 813.5,240.5 814.5,236.8 815.5,234.3 816.5,232.1 817.5,229.1 818.5,225.2 819.5,222.1 820.5,218.6 821.5,215.8 822.5,213.2 823.5,210.1 824.5,206.8 825.5,204.2 826.5,200.2 827.5,197.4 828.5,194.7 829.5,191.5 830.5,188.7 831.5,185.3 832.5,181.9 833.5,179.2 834.5,175.6 835.5,172.3 836.5,170.5 837.5,167.4 838.5,164.7 839.5,161.0 840.5,159.0 841.5,156.2 842.5,153.5 843.5,150.3 844.5,148.9 845.5,147.2 846.5,144.6 847.5,142.0 848.5,140.1 849.5,138.5 850.5,134.8 851.5,134.3 852.5,132.9 853.5,131.4 854.5,130.3 855.5,128.6 856.5,126.9 857.5,125.6 858.5,124.8 859.5,123.1 860.5,122.5 861.5,122.2 862.5,122.0 863.5,120.4 864.5,120.0 865.5,119.8 866.5,120.2 867.5,119.4 868.5,120.2 869.5,119.1 870.5,119.7 871.5,120.1 872.5,121.1 873.5,121.8 874.5,121.2 875.5,122.4 876.5,123.9 877.5,124.5 878.5,125.2 879.5,127.8 880.5,128.9 881.5,130.3 882.5,131.4 883.5,133.9 884.5,135.0 885.5,137.5 886.5,138.5 887.5,140.6 888.5,143.2 889.5,145.0 890.5,148.0 891.5,150.1 892.5,152.0 893.5,155.0 894.5,157.4 895.5,160.7 896.5,162.6 897.5,165.5 898.5,169.1 899.5,172.5 900.5,175.3 901.5,177.3 902.5,180.3 903.5,184.0 904.5,186.2 905.5,188.9 906.5,192.5 907.5,195.8 908.5,198.3 909.5,201.0 910.5,204.2 911.5,208.4 912.5,210.8 913.5,214.2 914.5,217.4 915.5,220.7 916.5,223.3 917.5,226.7 918.5,229.0 919.5,232.2 920.5,234.8 921.5,238.7 922.5,241.0 923.5,243.4 924.5,246.3 925.5,249.0 926.5,252.0 927.5,253.4 928.5,256.1 929.5,258.8 930.5,262.6 931.5,264.0 932.5,265.6 933.5,268.0 934.5,270.6 935.5,271.4 936.5,273.0 937.5,275.5 938.5,276.7 939.5,278.3 940.5,279.0 941.5,281.5 942.5,282.5 943.5,283.0 944.5,284.0 945.5,283.5 946.5,285.5 947.5,285.7 948.5,286.5 949.5,286.9 950.5,286.7 951.5,286.1 952.5,287.2 953.5,286.5 954.5,286.5 955.5,286.0 956.5,285.7 957.5,284.2 958.5,285.2 959.5,284.0 960.5,283.5 961.5,282.9 962.5,280.8 963.5,278.6 964.5,277.8 965.5,276.2 966.5,275.0 967.5,273.6 968.5,270.8 969.5,270.2 970.5,267.3 971.5,266.2 972.5,263.9 973.5,261.6 974.5,259.4 975.5,256.8 976.5,254.4 977.5,251.3 978.5,249.6 979.5,247.9 980.5,245.3 981.5,242.2 982.5,239.1 983.5,235.5 984.5,233.7 985.5,230.0 986.5,227.0 987.5,223.9 988.5,221.1 989.5,217.7 990.5,214.8 991.5,211.2 992.5,208.5 993.5,206.7 994.5,202.4 995.5,199.2 996.5,196.4 997.5,193.4 998.5,189.4 999.5,186.8 1000.5,184.3 1001.5,181.0 1002.5,177.9 1003.5,175.7 1004.5,171.6 1005.5,169.1 1006.5,166.0 1007.5,164.2 1008.5,159.8 1009.5,157.8 1010.5,155.2 1011.5,153.3 1012.5,150.8 1013.5,148.8 1014.5,145.0 1015.5,143.9 1016.5,141.3 1017.5,139.0 1018.5,137.6 1019.5,135.0 1020.5,132.6 1021.5,131.8 1022.5,129.6 1023.5,128.6 1024.5,127.7 1025.5,126.4 1026.5,125.8 1027.5,123.9 1028.5,122.2 1029.5,121.8 1030.5,121.0 1031.5,120.2 1032.5,120.5 1033.5,119.6 1034.5,118.6 1035.5,119.8 1036.5,119.3 1037.5,119.6 1038.5,119.7 1039.5,120.3 1040.5,120.4 1041.5,121.5 1042.5,121.8 1043.5,122.5 1044.5,123.4 1045.5,123.4 1046.5,125.2 1047.5,126.3 1048.5,127.9 1049.5,128.5 1050.5,131.5 1051.5,132.4 1052.5,133.4 1053.5,135.0 1054.5,137.6 1055.5,139.7 1056.5,141.5 1057.5,144.0 1058.5,145.9 1059.5,148.9 1060.5,150.6 1061.5,153.4 1062.5,156.5 1063.5,159.9 1064.5,160.8 1065.5,163.8 1066.5,166.4 1067.5,170.1 1068.5,172.0 1069.5,175.2 1070.5,178.4 1071.5,180.9 1072.5,184.0 1073.5,187.3 1074.5,189.5 1075.5,193.0 1076.5,196.6 1077.5,200.0 1078.5,203.0" fill="none" stroke="#ecea22" stroke-width="3.1" stroke-linejoin="round"/>
<line x1="235.5" y1="565.0" x2="1079.0" y2="565.0" stroke="#c8c820" stroke-width="2"/>
<line x1="266" y1="565.0" x2="616" y2="565.0" stroke="#86c49a" stroke-width="2"/>
<polyline points="235.5,565.0 257.0,565.0 257.0,565.0 258.3,542.8 259.8,561.4 261.1,528.0 262.5,557.6 263.3,542.7 265.4,565.0 266.2,524.7 267.9,545.2 270.0,528.3 270.9,550.7 272.5,511.8 274.1,547.5 275.8,500.3 276.7,529.9 278.6,505.9 279.7,523.3 281.8,509.2 283.2,521.9 284.0,502.5 285.8,520.7 287.9,498.3 290.0,521.5 292.2,477.1 293.7,507.4 295.8,489.3 297.2,508.6 299.0,477.3 300.9,489.9 302.0,474.6 303.6,486.9 305.3,476.6 306.1,491.0 307.6,469.6 308.6,493.4 310.1,463.4 311.3,488.1 313.2,461.5 315.2,470.9 316.8,456.0 317.7,471.0 318.6,449.0 320.8,477.2 321.9,440.1 323.9,473.2 325.4,448.1 326.6,457.9 328.5,432.8 329.4,456.8 330.4,436.0 331.8,453.0 333.0,436.0 335.1,450.0 336.3,424.4 337.8,457.0 338.8,433.8 339.6,445.9 340.4,431.6 341.3,446.8 342.6,430.2 344.5,444.9 346.1,418.3 348.1,438.6 349.0,416.4 350.9,433.7 352.7,415.1 354.6,429.0 356.4,410.2 357.8,430.6 359.9,410.3 361.3,435.1 362.1,397.5 363.0,438.6 364.1,405.9 365.7,429.6 367.0,391.1 369.1,415.7 370.9,401.8 372.1,427.7 373.9,397.0 375.4,413.9 377.3,381.5 379.5,413.8 380.4,385.8 382.4,417.1 383.3,386.5 384.5,408.4 386.2,379.5 387.5,414.5 389.0,382.4 390.2,401.3 392.2,373.9 393.6,407.5 395.7,385.7 397.4,410.5 398.8,376.6 401.0,399.3 402.9,383.2 404.6,415.4 405.5,371.5 406.7,394.6 408.2,384.0 409.3,398.1 411.4,372.1 412.9,398.4 413.8,376.1 415.1,394.1 416.4,366.7 417.3,400.8 419.4,368.6 420.5,388.7 422.7,361.0 424.8,403.4 426.8,368.2 427.7,399.2 429.0,365.5 430.6,402.4 432.8,366.5 434.0,389.1 435.1,380.9 436.7,397.8 437.6,379.5 438.5,395.1 440.2,363.9 442.2,389.1 443.1,366.2 444.5,396.0 446.6,369.7 447.5,398.9 448.3,369.3 449.8,396.2 452.0,371.2 453.8,396.0 455.1,374.9 456.2,391.4 457.4,369.9 458.7,399.5 460.0,375.1 461.7,405.8 463.9,374.4 465.5,405.5 467.3,381.9 469.1,414.9 471.0,376.9 472.7,395.5 474.4,379.0 475.5,407.0 477.3,370.3 479.0,411.7 479.9,379.0 481.6,404.3 483.1,384.6 484.8,410.8 486.6,389.4 488.0,421.2 489.1,375.5 491.2,424.2 492.1,384.0 493.5,422.9 494.6,388.4 495.9,419.3 497.6,394.8 499.5,421.1 500.7,390.9 502.4,425.1 504.2,396.2 505.5,423.5 506.8,387.2 508.2,428.4 509.9,400.2 511.0,424.3 512.0,411.3 513.2,432.5 515.3,402.1 516.3,435.6 518.2,406.9 519.4,436.0 520.7,415.2 522.2,433.7 524.2,412.8 526.3,435.3 527.3,420.4 528.2,445.7 529.7,416.4 531.0,444.6 532.2,426.9 533.5,442.7 534.5,418.7 536.2,448.8 537.1,435.3 538.5,459.3 540.7,429.4 542.3,472.2 543.5,423.3 545.0,452.0 546.1,434.7 547.7,462.3 549.9,432.2 551.0,460.7 552.2,439.1 554.2,474.1 555.5,451.6 556.9,483.9 558.4,451.4 560.2,472.3 561.4,461.7 563.6,492.8 565.5,457.0 566.8,485.2 568.8,470.8 569.6,485.6 571.3,461.5 573.2,507.1 574.9,473.9 576.0,507.9 577.8,472.0 578.7,499.5 580.0,487.3 582.0,523.7 583.5,490.8 585.1,509.7 587.0,480.3 588.3,521.7 590.2,494.4 592.2,524.8 593.6,508.5 595.6,525.4 596.9,512.0 599.1,544.5 600.8,521.8 601.6,546.8 602.5,524.1 604.3,538.5 606.4,522.6 608.0,548.8 609.8,534.7 610.9,557.2 611.8,540.4 613.0,561.6 614.4,542.5 615.4,565.0 616.9,547.0 618.0,565.0" fill="none" stroke="#dede22" stroke-width="1.7" stroke-linejoin="round"/>
<polyline points="664.5,565.0 666.6,560.5 668.6,556.0 670.7,551.5 672.8,547.1 674.9,542.6 676.9,538.1 679.0,534.0 681.1,529.8 683.2,526.9 685.3,523.1 687.4,518.7 689.5,515.6 691.6,511.9 693.6,507.2 695.7,504.7 697.8,501.0 699.9,497.3 702.0,493.0 704.1,490.2 706.2,486.8 708.3,482.6 710.5,477.5 712.6,474.4 714.8,468.9 716.9,465.3 719.0,461.9 721.2,456.4 723.3,452.2 725.5,448.9 727.6,443.8 730.0,442.8 732.5,442.2 734.9,441.7 737.3,438.7 739.6,434.9 742.0,430.2 744.3,425.5 746.7,420.9 749.0,416.3 751.9,420.9 754.8,424.1 757.1,420.1 759.4,415.7 761.6,410.5 763.9,406.5 766.2,402.9 768.5,397.5 771.4,399.9 774.3,403.2 777.2,396.8 780.1,391.7 782.4,390.1 784.8,387.1 787.1,385.5 789.5,384.3 791.8,381.4 794.0,380.1 796.3,377.7 798.5,376.2 800.7,374.7 802.9,374.6 805.2,371.4 807.4,369.7 810.3,371.7 813.2,373.9 815.8,372.4 818.4,370.2 821.0,369.3 823.3,367.9 825.5,368.3 827.8,367.3 830.1,367.2 832.3,365.7 834.6,366.1 837.5,368.1 840.5,369.9 842.7,366.9 844.9,367.0 847.1,364.5 849.4,362.7 851.6,361.0 853.8,359.2 856.0,357.8 858.6,359.7 861.2,362.8 863.8,366.4 866.2,365.1 868.7,363.6 871.1,362.3 873.6,361.0 876.0,361.7 878.5,362.6 880.9,361.5 883.3,363.2 885.9,367.3 888.5,371.1 891.1,376.4 894.0,374.1 896.9,373.0 899.2,375.5 901.6,378.4 903.9,380.8 906.3,383.0 908.6,385.7 911.5,382.4 914.4,382.0 917.3,387.7 920.3,395.0 922.9,394.2 925.4,392.8 928.0,391.8 930.6,394.9 933.2,398.3 935.8,401.6 938.0,404.3 940.3,406.2 942.5,409.1 944.7,411.8 946.9,415.4 949.2,416.7 951.4,421.4 953.7,424.7 956.1,428.8 958.4,433.7 960.8,438.4 963.1,442.3 965.7,443.4 968.3,443.4 970.9,444.7 973.3,447.2 975.8,448.8 978.2,452.2 980.6,453.9 982.9,458.1 985.3,461.8 987.6,466.5 990.0,471.4 992.3,474.4 994.6,478.8 996.8,481.9 999.1,485.1 1001.4,486.8 1003.6,491.3 1005.9,495.0 1008.2,498.7 1010.4,503.8 1012.7,506.8 1015.0,513.2 1017.2,517.0 1019.5,521.9 1021.7,526.7 1023.8,531.5 1026.0,536.3 1028.2,541.1 1030.3,545.8 1032.5,550.6 1034.7,555.4 1036.8,560.2 1039,565" fill="none" stroke="#a4dcb6" stroke-width="1.8" stroke-linejoin="round"/>
<text x="407.5" y="461" font-family="Liberation Sans" font-size="15" fill="#d6cf1e" stroke="#d6cf1e" stroke-width="0.3">4 GHz scope</text>
<text x="800.5" y="440.5" font-family="Liberation Sans" font-size="15" letter-spacing="0.2" fill="#1f9d70" stroke="#1f9d70" stroke-width="0.3">500 MHz scope</text>
<path d="M652 100.7h10l-5 6z M652 329.2h10l-5 -6z M652 337.1h10l-5 6z M652 565.0h10l-5 -6z" fill="#e89a20"/>
<g fill="#e8e620"><path d="M1082 206 l7 -6 v12z"/><text x="1089" y="214" font-family="Liberation Sans" font-size="10" font-weight="bold">1</text><text x="1097" y="205" font-family="Liberation Sans" font-size="8" font-weight="bold">2</text><path d="M1093 214v6" stroke="#e8e620" stroke-width="2"/></g>
<g fill="#20b080"><path d="M1083 226 l7 -6 v12z"/><text x="1090" y="232" font-family="Liberation Sans" font-size="10" font-weight="bold">m2</text><path d="M1094 232v6" stroke="#20b080" stroke-width="2"/></g>
<g fill="#eee"><path d="M1090 548v12" stroke="#eee" stroke-width="2"/><path d="M1085 558h10l-5 6z"/><text x="1095" y="559" font-family="Liberation Sans" font-size="9" font-weight="bold">12</text></g>
</svg>

<!-- bottom control bar -->
<div class="a" style="left:228.5px;top:570px;width:884px;height:61px;background:#f0f0f0"></div>
<svg class="a" style="left:233px;top:575px" width="13" height="17"><path d="M6.5 4V16" stroke="#222" stroke-width="2"/><path d="M6.5 2l-3.5 5h7z" fill="#222"/><path d="M1 1.5h11" stroke="#bbb" stroke-width="1"/></svg>
<div class="a btn" style="left:253px;top:575px;width:23.0px;height:11.5px;"></div>
<div class="a btn" style="left:253px;top:588px;width:23.0px;height:12.0px;"></div>
<svg class="a" style="left:253px;top:575px" width="23" height="25"><path d="M8 7l3.5-3 3.5 3M8 17l3.5 3 3.5-3" fill="none" stroke="#222" stroke-width="2"/></svg>
<div class="a btn" style="left:279.5px;top:575px;width:16.0px;height:25.0px;"></div>
<svg class="a" style="left:279.5px;top:575px" width="16" height="25"><path d="M4.5 7l3.5-3 3.5 3M4.5 17l3.5 3 3.5-3" fill="none" stroke="#222" stroke-width="2"/></svg>
<div class="a btn" style="left:312.5px;top:575px;width:23.0px;height:25.0px;"></div>
<div class="a" style="left:316.5px;top:579px;width:15.5px;height:15.5px;border-radius:50%;background:#1ab0b8;border:1.2px solid #333"></div>
<div class="a" style="left:338px;top:575px;width:23px;height:25px;background:linear-gradient(#d8eefa,#a8d8f4);border:1.5px solid #3c8cc8;border-radius:3px"></div>
<div class="a" style="left:342px;top:579px;width:15.5px;height:15.5px;border-radius:50%;background:#e41c1c;border:1.2px solid #333"></div>
<div class="a btn" style="left:363.5px;top:575px;width:23.0px;height:25.0px;"></div>
<div class="a" style="left:367.5px;top:579px;width:15.5px;height:15.5px;border-radius:50%;background:#ece01c;border:1.2px solid #333"></div>
<div class="a btn" style="left:399.7px;top:575.5px;width:22.5px;height:24.5px;"></div>
<div class="a btn" style="left:425.5px;top:575.5px;width:22.5px;height:24.5px;"></div>
<div class="a btn" style="left:451px;top:575.5px;width:22.5px;height:24.5px;"></div>
<svg class="a" style="left:399.7px;top:575.5px" width="23" height="25"><rect x="4.5" y="6" width="14" height="12" fill="#fff" stroke="#111" stroke-width="2"/><path d="M12 11l5-4M14 16l4-3" stroke="#333" stroke-width="2"/></svg>
<svg class="a" style="left:425.5px;top:575.5px" width="23" height="25"><path d="M3 14l8-5 9 4-8 5z" fill="#888" stroke="#222" stroke-width="1.2"/><path d="M3 14v3l9 4 8-5v-3" fill="#555" stroke="#222" stroke-width="1.2"/><path d="M8 10l5-4 5 2" fill="#eee" stroke="#333" stroke-width="1"/><circle cx="12" cy="13" r="1.3" fill="#d33"/></svg>
<svg class="a" style="left:451px;top:575.5px" width="23" height="25"><g stroke="#666" stroke-width="1.3"><path d="M11.5 3v4M11.5 18v4M3 12.5h4M16 12.5h4M5.5 6.5l3 3M17.5 6.5l-3 3M5.5 18.5l3-3M17.5 18.5l-3-3"/></g><circle cx="11.5" cy="12.5" r="4.5" fill="#ece01c" stroke="#999" stroke-width="1"/></svg>
<div class="a btn" style="left:487.5px;top:575.5px;width:23.5px;height:25.0px;"></div>
<div class="a" style="left:490.5px;top:578px;width:17.5px;height:19.5px;background:#111"></div>
<div class="t" style="left:492.5px;top:579.5px;font-size:17.5px;color:#f4f4f4;-webkit-text-stroke:0.7px #f4f4f4">H</div>
<div class="a" style="left:513.5px;top:575.5px;width:92.5px;height:27px;background:#000"></div>
<div class="t" style="left:518px;top:578.5px;font-size:16px;color:#e4e4e4;letter-spacing:-0.1px;-webkit-text-stroke:0.3px #e4e4e4">50.0 ns/</div>
<div class="a btn" style="left:608px;top:575.5px;width:18.0px;height:26.5px;"></div>
<div class="a btn" style="left:628px;top:575.5px;width:18.0px;height:26.5px;"></div>
<svg class="a" style="left:608px;top:575.5px" width="38" height="27"><path d="M6.5 10.5l5 6" stroke="#666" stroke-width="3.5" stroke-linecap="round"/><path d="M22 13.5c2.2-4.5 4.5-4.5 6.75 0s4.5 4.5 6.75 0" fill="none" stroke="#222" stroke-width="1.8"/></svg>
<div class="a" style="left:650.5px;top:576.5px;width:13.5px;height:16px;background:#f08c1c"></div>
<svg class="a" style="left:650.5px;top:576.5px" width="14" height="16"><path d="M7 6v8" stroke="#222" stroke-width="2"/><path d="M7 2.5l-2.5 4h5z" fill="#222"/></svg>
<div class="a" style="left:670.5px;top:575.5px;width:136.5px;height:27px;background:#000"></div>
<div class="t" style="left:674px;top:578.5px;font-size:16px;color:#e4e4e4;letter-spacing:-0.1px;-webkit-text-stroke:0.3px #e4e4e4">0.0 s</div>
<div class="a btn" style="left:811px;top:575.5px;width:18.0px;height:26.5px;"></div>
<div class="a btn" style="left:831.5px;top:575.5px;width:16.0px;height:26.5px;"></div>
<div class="a btn" style="left:850.5px;top:575.5px;width:17.5px;height:26.5px;"></div>
<svg class="a" style="left:811px;top:575.5px" width="57" height="27"><path d="M11.5 9v9l-5-4.5z M56 0" fill="#111"/><path d="M62 0" /><path d="M45 9v9l5-4.5z" fill="#111"/></svg>
<div class="t" style="left:835px;top:582px;font-size:13px;font-weight:bold;color:#111">0</div>
<div class="a btn" style="left:931.5px;top:575px;width:22.0px;height:25.0px;"></div>
<div class="a" style="left:934px;top:578px;width:17px;height:19px;background:#111"></div>
<div class="t" style="left:936.5px;top:579px;font-size:18px;font-weight:bold;color:#e4e41c">T</div>
<div class="a" style="left:958px;top:576px;width:79px;height:26.5px;background:#000"></div>
<div class="t" style="left:961px;top:579px;font-size:16px;color:#dede1c;letter-spacing:-0.1px;-webkit-text-stroke:0.45px #dede1c">2 mV</div>
<div class="a btn" style="left:1040.5px;top:575.5px;width:23.0px;height:12.5px;"></div>
<div class="a btn" style="left:1040.5px;top:589px;width:23.0px;height:13.0px;"></div>
<svg class="a" style="left:1040.5px;top:575.5px" width="23" height="27"><path d="M6 9.5l5.5-5 5.5 5z M6 17.5l5.5 5 5.5-5z" fill="#111"/></svg>
<svg class="a" style="left:1072px;top:575px" width="14" height="18"><path d="M1 1.5v14" stroke="#bbb" stroke-width="1"/><path d="M7 5V16" stroke="#222" stroke-width="2"/><path d="M7 2.5l-3 5h6z" fill="#222"/><path d="M2 1.5h11" stroke="#bbb" stroke-width="1"/></svg>

<!-- tabs -->
<div class="a" style="left:229.5px;top:608px;width:56px;height:23px;background:#fbfbfb"></div>
<div class="t" style="left:239.5px;top:611px;font-size:15.8px;color:#1a1a1a;letter-spacing:-0.7px;-webkit-text-stroke:0.3px #1a1a1a">Status</div>
<div class="a" style="left:286px;top:607px;width:51.5px;height:24px;background:#2b2b2b"></div>
<div class="t" style="left:290px;top:611px;font-size:15.8px;color:#e8e8e8;letter-spacing:-0.7px;-webkit-text-stroke:0.3px #e8e8e8">Scales</div>

<!-- table -->
<div class="a" style="left:225px;top:630.5px;width:889px;height:85.5px;background:#2b2b2b"></div>
<div class="m" style="left:255.5px;top:634px;font-size:14px;line-height:16.8px;letter-spacing:0.045px;-webkit-text-stroke:0.5px currentColor"><span style="color:#e4e4e4">Source           Horiz Scale  Position          Vertical Scale Offset</span>
<span style="color:#d2ce1e">Channel 1        50.0 ns/div  0.0 s             100 mV/div     -40.3 mV</span>
<span style="color:#dcdc1c">Function 1       5.00 ns/div  37.722125 ns      10.0000 mV/div 271.808 mV</span>
<span style="color:#b4d8bc">Function 2       5.00 ns/div  13.388900 ns      10.0000 mV/div 262.623 mV</span>
<span style="color:#1c9a64">Memory 2         50.0 ns/div  0.0 s             100 mV/div     26.2297 mV</span></div>
<div class="a" style="left:157px;top:716px;width:962px;height:3px;background:#fff"></div>
</body></html>
